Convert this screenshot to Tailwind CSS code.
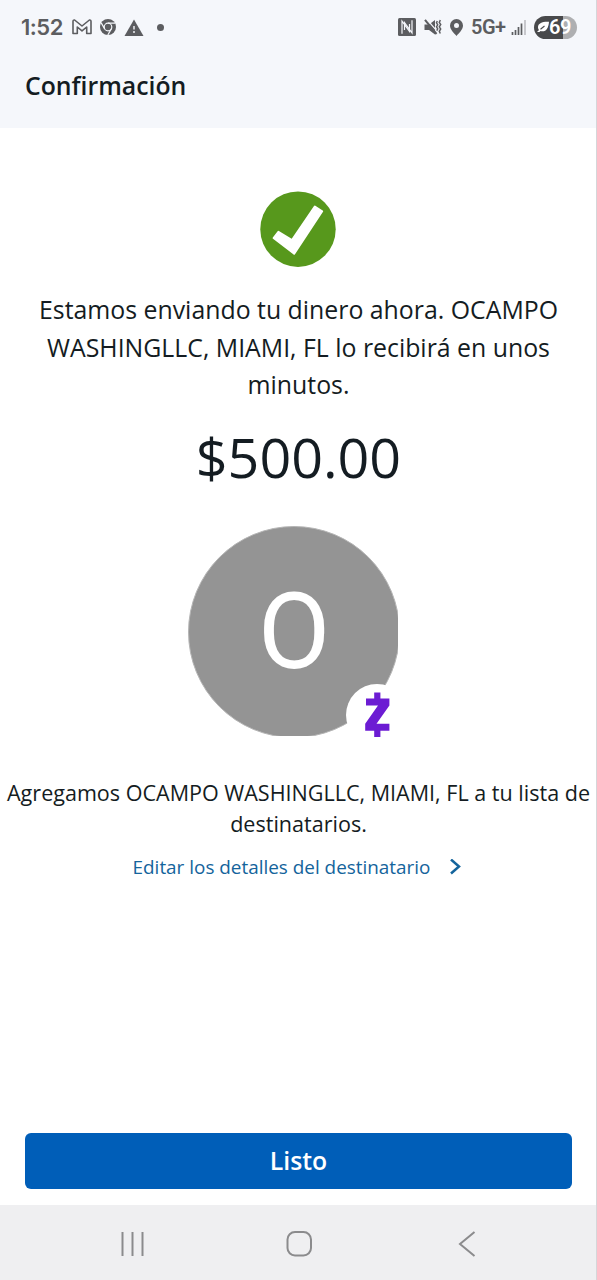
<!DOCTYPE html>
<html lang="es">
  <head>
    <meta charset="UTF-8" />
    <meta name="viewport" content="width=device-width, initial-scale=1.0" />
    <title>Confirmación</title>
    <script src="https://cdn.jsdelivr.net/npm/@tailwindcss/browser@4"></script>
  </head>
  <body class="bg-white font-['Open_Sans',sans-serif] text-[#141c22]">
    <div class="w-[597px] h-[1280px] flex flex-col overflow-hidden border-r border-[#d5d6d9]">
      <header class="h-32 shrink-0 bg-[#f5f7fb]">
        <!-- Status bar -->
        <div class="h-[54px] pl-[21px] pr-[19px] flex items-center justify-between font-[Roboto,sans-serif] text-[#5c5d60]">
          <div class="flex items-center">
            <span class="w-[51px] text-[22px] leading-none font-semibold font-[Inter,sans-serif] tracking-[-0.5px] whitespace-nowrap">1:52</span>
            <svg class="w-5 h-4" viewBox="0 0 20 16" fill="none" stroke="currentColor" stroke-width="1.6" stroke-linejoin="round">
              <path d="M1 14.5V2.5Q1 .8 2.6 1L10 7 17.4 1Q19 .8 19 2.5V14.5H14.7V8L10 11.8 5.3 8V14.5Z" />
            </svg>
            <svg class="w-4 h-4 ml-2" viewBox="0 0 16 16">
              <circle cx="8" cy="8" r="8" fill="currentColor" />
              <circle cx="8" cy="8" r="3.8" fill="none" stroke="#f5f7fb" stroke-width="1.2" />
              <path d="M8 4.2H15M4.7 9.9 1.2 3.9M11.3 9.9 7.8 16" stroke="#f5f7fb" stroke-width="1.2" />
            </svg>
            <svg class="w-5 h-[17px] ml-2" viewBox="0 0 20 17">
              <path d="M10 .5 19.5 17H.5Z" fill="currentColor" />
              <path d="M10 7V10.5M10 12V14" stroke="#d5d6da" stroke-width="1.8" />
            </svg>
            <span class="w-[7px] h-[7px] ml-[13px] rounded-full bg-current"></span>
          </div>
          <div class="flex items-center">
            <svg class="w-[18px] h-[18px]" viewBox="0 0 18 18">
              <rect width="18" height="18" rx="1.5" fill="currentColor" />
              <path d="M4 15.8V3.2L11.5 13.5V6M14 2.2V14.8L6.5 4.5V12" fill="none" stroke="#f5f7fb" stroke-width="1.2" />
            </svg>
            <svg class="w-[18px] h-[18px] ml-2" viewBox="0 0 18 18" fill="none" stroke="currentColor">
              <path d="M.5 6.5H5L11 2V16.5L5 12H.5Z" fill="currentColor" stroke="none" />
              <path d="M2.5 1 13 13.2" stroke="#f5f7fb" stroke-width="1.2" />
              <path d="M1 1.8 12.5 16" stroke-width="2" />
              <path d="M13.3 3 12.5 4.8 13.7 6.8 12.5 8.8 13.7 10.8 12.8 12.6M16.3 2 15.3 4.4 16.7 6.6 15.3 8.8 16.7 11 15.3 13.4 16.3 15.5" stroke-width="1.5" />
            </svg>
            <svg class="w-[13px] h-[17px] ml-2" viewBox="0 0 13 17">
              <path fill="currentColor" fill-rule="evenodd" d="M6.5 0A6.5 6.5 0 0 0 0 6.5C0 10.5 4 14 6.5 17 9 14 13 10.5 13 6.5A6.5 6.5 0 0 0 6.5 0ZM6.5 4A2.5 2.5 0 1 1 6.5 9 2.5 2.5 0 0 1 6.5 4Z" />
            </svg>
            <span class="w-10 ml-2 text-xl leading-none font-semibold tracking-[-0.5px] whitespace-nowrap">5G+</span>
            <svg class="w-4 h-4" viewBox="0 0 16 16">
              <path d="M1.5 13V16M4.5 11V16M7.5 8V16M10.5 4.5V16" stroke="currentColor" stroke-width="1.7" />
              <path d="M14 1V16" stroke="#bfc0c4" stroke-width="1.7" />
            </svg>
            <div class="w-[43px] h-[23px] ml-[7px] pl-[3px] rounded-full flex items-center bg-linear-to-r from-[#48494b] from-68% to-[#aeafb1] to-68% text-white">
              <svg class="w-[12px] h-[12px]" viewBox="0 0 12 12">
                <path fill="currentColor" d="M12 .8C5 .5 1 2.5 1 6.2C1 7.5 1.5 8.3 2 8.9L0 11H2.5L3.5 10C8.5 11.5 11.5 8 12 .8Z" />
                <path d="M3.5 8.2 7.5 5" stroke="#48494b" stroke-width="1.1" />
              </svg>
              <span class="text-xl leading-none font-semibold tracking-[-0.5px]">69</span>
            </div>
          </div>
        </div>
        <h1 class="pl-[25px] pt-[13px] text-[24.8px] leading-9 font-semibold">Confirmación</h1>
      </header>

      <main class="flex-1 flex flex-col items-center text-center pl-px">
        <svg class="w-[76px] h-[76px] mt-[63px] mr-px shrink-0" viewBox="0 0 76 76">
          <circle cx="38" cy="38.2" r="37.7" fill="#57981c" />
          <path d="M13.6 47 18.4 40.8 32 49 54.8 15.5 62.2 20.3 34.2 62.8Z" fill="#fff" stroke="#fff" stroke-width="2" stroke-linejoin="round" />
        </svg>

        <p class="mt-[24px] text-[24.85px] leading-[37.5px] whitespace-nowrap">
          Estamos enviando tu dinero ahora. OCAMPO<br />
          WASHINGLLC, MIAMI, FL lo recibirá en unos<br />
          minutos.
        </p>
        <p class="mt-[15.5px] text-[55.6px] leading-[76px]">$500.00</p>

        <!-- Recipient avatar with Zelle badge, cropped slightly at the right and bottom -->
        <div class="relative w-[210px] h-[210px] mt-[31px] mr-[11px] shrink-0">
          <div class="w-[210px] h-[210px] overflow-hidden">
            <div class="w-[212px] h-[212px] rounded-full bg-[#949494] border border-[#b5b5b5] flex items-center justify-center">
              <span class="font-[Roboto,sans-serif] text-[105px] leading-none text-white">O</span>
            </div>
          </div>
          <div class="absolute left-[158px] top-[158px] w-[62px] h-[62px] rounded-full bg-white flex items-center justify-center">
            <svg class="w-[26px] h-[46px]" viewBox="0 0 26 46" fill="#6c1cd3">
              <path d="M10.2 .5H16.4V6.5H25.4V13.5L12.5 31.8H25.4V38.8H16.4V45H10.2V38.8H1.2V31.8L14 13.5H2V6.5H10.2Z" />
            </svg>
          </div>
        </div>

        <p class="mt-[41px] text-[21.56px] leading-[31px] whitespace-nowrap">
          Agregamos OCAMPO WASHINGLLC, MIAMI, FL a tu lista de<br />
          destinatarios.
        </p>
        <a href="#" class="mt-[13px] mr-[3px] flex items-center text-[18.9px] leading-[30px] text-[#14649c]">
          Editar los detalles del destinatario
          <svg class="w-3 h-4 ml-[19px]" viewBox="0 0 12 16" fill="none" stroke="currentColor" stroke-width="2.5">
            <path d="M2 .5 10 7.5 2 14.5" />
          </svg>
        </a>

        <button class="w-[547px] h-14 mt-auto mb-4 rounded-md bg-[#005eb8] text-white text-[24.8px] font-semibold">Listo</button>
      </main>

      <!-- System navigation -->
      <nav class="h-[75px] shrink-0 flex pl-[120px] pt-[26px] bg-[#efeff1] text-[#8b8b8d]">
        <svg class="w-[26px] h-[26px]" viewBox="0 0 26 26" stroke="currentColor" stroke-width="2">
          <path d="M2.5 1V25M12.5 1V25M22.5 1V25" />
        </svg>
        <svg class="w-[26px] h-[26px] ml-[140px]" viewBox="0 0 26 26" fill="none" stroke="currentColor" stroke-width="2">
          <rect x="1.5" y="1" width="23.5" height="23.5" rx="7.5" />
        </svg>
        <svg class="w-[18px] h-[26px] ml-[146px]" viewBox="0 0 18 26" fill="none" stroke="currentColor" stroke-width="2">
          <path d="M16.5 1 2 13 16.5 25" />
        </svg>
      </nav>
    </div>
  </body>
</html>
